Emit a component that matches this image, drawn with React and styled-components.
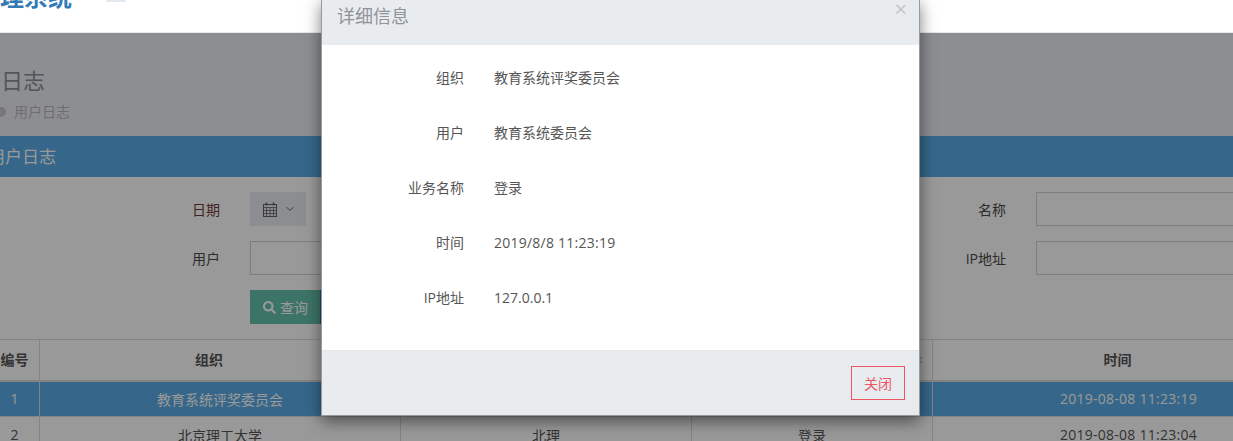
import React from "react";
import styled, { createGlobalStyle } from "styled-components";
import { FaSearch, FaSort } from "react-icons/fa";
import { FiChevronDown } from "react-icons/fi";

const FONT = `"Open Sans", "Noto Sans CJK SC", sans-serif`;

const GlobalStyle = createGlobalStyle`
  html, body {
    margin: 0;
    padding: 0;
    height: 100%;
    overflow: hidden;
    background: #fff;
    font-family: ${FONT};
    font-size: 14px;
    color: #333;
  }
  * { box-sizing: border-box; }
`;

const rows = [
  { no: 1, org: "教育系统评奖委员会", user: "教育系统委员会", biz: "登录", time: "2019-08-08 11:23:19", active: true },
  { no: 2, org: "北京理工大学", user: "北理", biz: "登录", time: "2019-08-08 11:23:04" },
];

const detail = [
  ["组织", "教育系统评奖委员会"],
  ["用户", "教育系统委员会"],
  ["业务名称", "登录"],
  ["时间", "2019/8/8 11:23:19", true],
  ["IP地址", "127.0.0.1"],
];

function CalendarIcon() {
  return (
    <svg width="14" height="15" viewBox="0 0 14 15" fill="none" stroke="currentColor" strokeWidth="1">
      <rect x="0.5" y="2.5" width="13" height="12" />
      <path d="M0.5 5.5h13M0.5 8.5h13M0.5 11.5h13M3.5 5.5v9M7 5.5v9M10.5 5.5v9" strokeWidth="0.8" />
      <path d="M3.5 0.5v3M10.5 0.5v3" strokeWidth="1.6" />
    </svg>
  );
}

export default function App() {
  return (
    <Page>
      <GlobalStyle />
      <Header>
        <Brand>理系统</Brand>
        <MenuToggle />
      </Header>
      <Content>
        <PageHead>
          <PageTitle>日志</PageTitle>
          <Crumb>
            <Dot />
            用户日志
          </Crumb>
        </PageHead>
        <Card>
          <CardTitle>用户日志</CardTitle>
          <Filters>
            <FilterRow>
              <Label $red>日期</Label>
              <DateButton>
                <CalendarIcon />
                <FiChevronDown size={12} />
              </DateButton>
              <Spacer />
              <Label $right>名称</Label>
              <TextInput />
            </FilterRow>
            <FilterRow>
              <Label>用户</Label>
              <TextInput />
              <Spacer />
              <Label $right>IP地址</Label>
              <TextInput />
            </FilterRow>
            <ButtonRow>
              <SearchButton>
                <FaSearch size={13} />
                查询
              </SearchButton>
              <ExportButton />
            </ButtonRow>
          </Filters>
          <Table>
            <thead>
              <tr>
                <Th $w={50} $plain>编号</Th>
                <Th $w={361}>组织</Th>
                <Th $w={291}>用户</Th>
                <Th $w={241}>
                  业务名称
                  <SortIcon />
                </Th>
                <Th $w={392}>时间</Th>
              </tr>
            </thead>
            <tbody>
              {rows.map((r) => (
                <Tr key={r.no} $active={r.active}>
                  <Td>{r.no}</Td>
                  <Td>{r.org}</Td>
                  <Td>{r.user}</Td>
                  <Td>{r.biz}</Td>
                  <Td $time>{r.time}</Td>
                </Tr>
              ))}
            </tbody>
          </Table>
        </Card>
        <Backdrop />
      </Content>
      <Modal>
        <ModalHead>
          <ModalTitle>详细信息</ModalTitle>
          <CloseX>×</CloseX>
        </ModalHead>
        <ModalBody>
          {detail.map(([k, v, isTime]) => (
            <DetailRow key={k}>
              <DetailKey>{k}</DetailKey>
              <DetailValue $time={isTime}>{v}</DetailValue>
            </DetailRow>
          ))}
        </ModalBody>
        <ModalFoot>
          <CloseButton>关闭</CloseButton>
        </ModalFoot>
      </Modal>
    </Page>
  );
}

const Page = styled.div`
  position: relative;
  width: 1233px;
  height: 441px;
  overflow: hidden;
`;

const Header = styled.header`
  height: 33px;
  background: #fff;
  border-bottom: 1px solid #e7e7ee;
  display: flex;
  align-items: flex-start;
`;

const Brand = styled.div`
  margin: -17px 0 0 0;
  width: 106px;
  font-size: 24px;
  line-height: 28px;
  font-weight: 700;
  color: #337ab7;
`;

const MenuToggle = styled.div`
  width: 20px;
  height: 2px;
  background: #e3e8ee;
`;

const Content = styled.main`
  position: relative;
  height: 408px;
  background: #ecedf2;
  overflow: hidden;
`;

const PageHead = styled.div`
  height: 103px;
  padding-top: 32px;
`;

const PageTitle = styled.h1`
  margin: 0 0 0 1px;
  font-size: 22px;
  line-height: 30px;
  font-weight: 400;
  color: #8a9094;
`;

const Crumb = styled.div`
  display: flex;
  align-items: center;
  gap: 8px;
  margin: 7px 0 0 -4px;
  font-size: 14px;
  line-height: 20px;
  color: #b8b8ba;
`;

const Dot = styled.span`
  width: 10px;
  height: 10px;
  border-radius: 50%;
  background: #c6c6ca;
`;

const Card = styled.section`
  background: #fff;
`;

const CardTitle = styled.div`
  height: 41px;
  margin-left: -12px;
  font-size: 17px;
  line-height: 41px;
  color: #fff;
  background: #5aace6;
`;

const Filters = styled.div`
  width: 1336px;
  height: 162px;
  padding-top: 15px;
  display: flex;
  flex-direction: column;
  gap: 15px;
`;

const FilterRow = styled.div`
  height: 34px;
  display: flex;
  align-items: center;
`;

const Label = styled.label`
  flex: none;
  width: ${(p) => (p.$right ? "100px" : "220px")};
  margin-right: 30px;
  text-align: right;
  font-size: 14px;
  color: ${(p) => (p.$red ? "#6e3c3a" : "#4a4a4a")};
`;

const DateButton = styled.div`
  width: 56px;
  height: 34px;
  display: flex;
  align-items: center;
  gap: 7px;
  padding-left: 13px;
  background: #e9ecf0;
  color: #606060;
`;

const TextInput = styled.div`
  width: 300px;
  height: 34px;
  border: 1px solid #cdd3dc;
  background: #fff;
`;

const Spacer = styled.div`
  flex: 1;
`;

const ButtonRow = styled.div`
  margin-left: 250px;
  display: flex;
`;

const SearchButton = styled.div`
  width: 70px;
  height: 34px;
  display: flex;
  align-items: center;
  gap: 4px;
  padding-left: 13px;
  color: #fff;
  background: #66c2ae;
`;

const ExportButton = styled.div`
  width: 70px;
  height: 34px;
  background: #337ab7;
`;

const Table = styled.table`
  width: 1335px;
  margin-left: -11px;
  border-collapse: collapse;
  table-layout: fixed;
`;

const Th = styled.th`
  position: relative;
  height: 41px;
  width: ${(p) => p.$w}px;
  padding: 0 ${(p) => (p.$plain ? "0" : "22px")} 2px 0;
  text-align: center;
  font-size: 14px;
  font-weight: 700;
  border: 1px solid #ddd;
  border-bottom-width: 2px;
  color: #555;
`;

const SortIcon = styled(FaSort)`
  position: absolute;
  right: 7px;
  top: 14px;
  font-size: 12px;
  color: #d2d2d2;
`;

const Tr = styled.tr`
  background: ${(p) => (p.$active ? "#5aace6" : "#fff")};
  color: ${(p) => (p.$active ? "#fff" : "#555")};
`;

const Td = styled.td`
  height: 36px;
  padding: 0;
  text-align: center;
  font-size: 14px;
  letter-spacing: ${(p) => (p.$time ? "0.26px" : "0")};
  border: 1px solid #ddd;
`;

const Backdrop = styled.div`
  position: absolute;
  inset: 0;
  background: rgba(0, 0, 0, 0.4);
`;

const Modal = styled.div`
  position: absolute;
  left: 321px;
  top: -1px;
  width: 599px;
  height: 417px;
  display: flex;
  flex-direction: column;
  background: #fff;
  border: 1px solid rgba(0, 0, 0, 0.4);
  box-shadow: 0 5px 15px rgba(0, 0, 0, 0.5);
`;

const ModalHead = styled.div`
  position: relative;
  height: 45px;
  padding: 3px 0 0 15px;
  background: #e9ecef;
`;

const ModalTitle = styled.h4`
  margin: 0;
  font-size: 18px;
  line-height: 26px;
  font-weight: 400;
  color: #8f9498;
`;

const CloseX = styled.span`
  position: absolute;
  right: 12px;
  top: -4px;
  font-size: 22px;
  line-height: 24px;
  color: #c3c6c9;
`;

const ModalBody = styled.div`
  flex: 1;
  padding-top: 5px;
`;

const DetailRow = styled.div`
  height: 55px;
  display: flex;
  align-items: center;
`;

const DetailKey = styled.div`
  width: 142px;
  margin-right: 30px;
  text-align: right;
  font-size: 14px;
  line-height: 20px;
  color: #555;
`;

const DetailValue = styled.div`
  font-size: 14px;
  line-height: 20px;
  letter-spacing: ${(p) => (p.$time ? "0.24px" : "0")};
  color: #555;
`;

const ModalFoot = styled.div`
  height: 65px;
  padding: 15px 14px 0 0;
  display: flex;
  justify-content: flex-end;
  align-items: flex-start;
  border-top: 1px solid #e5e5e5;
  background: #e9ecef;
`;

const CloseButton = styled.button`
  width: 54px;
  height: 34px;
  padding: 0;
  background: transparent;
  border: 1px solid #ed5565;
  font-family: ${FONT};
  font-size: 14px;
  color: #ed5565;
`;
